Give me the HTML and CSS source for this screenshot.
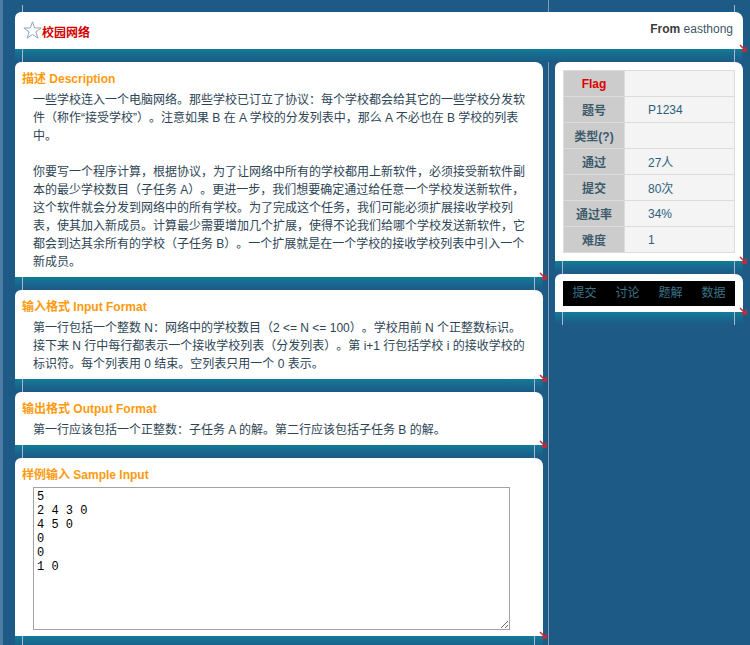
FILE: index.html
```html
<!DOCTYPE html>
<html lang="zh-CN">
<head>
<meta charset="utf-8">
<title>校园网络</title>
<link rel="stylesheet" href="styles.css">
</head>
<body>
<div class="page">
  <div class="cap"></div>
  <div class="panel">
    <header class="card head">
      <div class="title-group">
        <svg class="star" width="19" height="18" viewBox="0 0 19 18"><polygon points="9.5,0.8 11.6,6.9 18.1,7 12.9,10.9 14.8,17.1 9.5,13.4 4.2,17.1 6.1,10.9 0.9,7 7.4,6.9" fill="none" stroke="#8fa3bb" stroke-width="1" stroke-linejoin="miter"/></svg>
        <span class="title">校园网络</span>
      </div>
      <div class="from"><b>From</b> easthong</div>
      <svg class="mark" width="9" height="8" viewBox="0 0 9 8"><path d="M1 1 L7 7 M7 2.5 V7 H2.5" fill="none" stroke="#d9262b" stroke-width="1.5"/></svg>
    </header>
  </div>
  <div class="main">
    <div class="col">
      <section class="panel">
        <div class="card">
          <h2 class="sec-title">描述 Description</h2>
          <div class="sec-body">一些学校连入一个电脑网络。那些学校已订立了协议：每个学校都会给其它的一些学校分发软件（称作“接受学校”）。注意如果 B 在 A 学校的分发列表中，那么 A 不必也在 B 学校的列表中。<br><br>你要写一个程序计算，根据协议，为了让网络中所有的学校都用上新软件，必须接受新软件副本的最少学校数目（子任务 A）。更进一步，我们想要确定通过给任意一个学校发送新软件，这个软件就会分发到网络中的所有学校。为了完成这个任务，我们可能必须扩展接收学校列表，使其加入新成员。计算最少需要增加几个扩展，使得不论我们给哪个学校发送新软件，它都会到达其余所有的学校（子任务 B）。一个扩展就是在一个学校的接收学校列表中引入一个新成员。</div>
          <svg class="mark" width="9" height="8" viewBox="0 0 9 8"><path d="M1 1 L7 7 M7 2.5 V7 H2.5" fill="none" stroke="#d9262b" stroke-width="1.5"/></svg>
        </div>
      </section>
      <section class="panel">
        <div class="card">
          <h2 class="sec-title">输入格式 Input Format</h2>
          <div class="sec-body">第一行包括一个整数 N：网络中的学校数目（2 &lt;= N &lt;= 100）。学校用前 N 个正整数标识。接下来 N 行中每行都表示一个接收学校列表（分发列表）。第 i+1 行包括学校 i 的接收学校的标识符。每个列表用 0 结束。空列表只用一个 0 表示。</div>
          <svg class="mark" width="9" height="8" viewBox="0 0 9 8"><path d="M1 1 L7 7 M7 2.5 V7 H2.5" fill="none" stroke="#d9262b" stroke-width="1.5"/></svg>
        </div>
      </section>
      <section class="panel">
        <div class="card">
          <h2 class="sec-title">输出格式 Output Format</h2>
          <div class="sec-body">第一行应该包括一个正整数：子任务 A 的解。第二行应该包括子任务 B 的解。</div>
          <svg class="mark" width="9" height="8" viewBox="0 0 9 8"><path d="M1 1 L7 7 M7 2.5 V7 H2.5" fill="none" stroke="#d9262b" stroke-width="1.5"/></svg>
        </div>
      </section>
      <section class="panel">
        <div class="card">
          <h2 class="sec-title">样例输入 Sample Input</h2>
          <textarea class="sample" readonly>5
2 4 3 0
4 5 0
0
0
1 0</textarea>
          <svg class="mark" width="9" height="8" viewBox="0 0 9 8"><path d="M1 1 L7 7 M7 2.5 V7 H2.5" fill="none" stroke="#d9262b" stroke-width="1.5"/></svg>
        </div>
      </section>
    </div>
    <aside class="col">
      <section class="panel">
        <div class="card side-card">
          <table class="stats">
            <tr><th class="flag">Flag</th><td></td></tr>
            <tr><th>题号</th><td>P1234</td></tr>
            <tr><th>类型(?)</th><td></td></tr>
            <tr><th>通过</th><td>27人</td></tr>
            <tr><th>提交</th><td>80次</td></tr>
            <tr><th>通过率</th><td>34%</td></tr>
            <tr><th>难度</th><td>1</td></tr>
          </table>
          <svg class="mark" width="9" height="8" viewBox="0 0 9 8"><path d="M1 1 L7 7 M7 2.5 V7 H2.5" fill="none" stroke="#d9262b" stroke-width="1.5"/></svg>
        </div>
      </section>
      <section class="panel">
        <div class="card nav-card">
          <nav class="nav">
            <a href="#">提交</a><a href="#">讨论</a><a href="#">题解</a><a href="#">数据</a>
          </nav>
          <svg class="mark" width="9" height="8" viewBox="0 0 9 8"><path d="M1 1 L7 7 M7 2.5 V7 H2.5" fill="none" stroke="#d9262b" stroke-width="1.5"/></svg>
        </div>
      </section>
    </aside>
  </div>
</div>
</body>
</html>
```

FILE: styles.css
```css
html, body {
  margin: 0;
  padding: 0;
}
body {
  width: 750px;
  height: 645px;
  overflow: hidden;
  font-family: "Liberation Sans", "Noto Sans CJK SC", sans-serif;
  font-size: 12px;
  color: #2d4455;
  text-spacing-trim: space-all;
  background:
    linear-gradient(90deg, #4d7ca5 0, #4d7ca5 3px, transparent 3px),
    linear-gradient(90deg, transparent 548px, #7f9db8 548px, #7f9db8 549px, transparent 549px),
    #1d5a86;
}
.page {
  padding: 5px 7px 0 15px;
}
.cap {
  height: 7px;
  background:
    linear-gradient(90deg, transparent 7px, #a6b9ca 7px, #a6b9ca 8px, transparent 8px),
    linear-gradient(270deg, transparent 8px, #a6b9ca 8px, #a6b9ca 9px, transparent 9px);
}
.panel::after {
  content: "";
  display: block;
  height: 13px;
  background:
    linear-gradient(90deg, transparent 7px, #a6b9ca 7px, #a6b9ca 8px, transparent 8px),
    linear-gradient(270deg, transparent 8px, #a6b9ca 8px, #a6b9ca 9px, transparent 9px),
    linear-gradient(180deg, #127c97 0, #18698f 50%, #1d5a86 100%);
}
.card {
  position: relative;
  background: #fff;
  border-radius: 6px 8px 0 0;
  padding: 8px 12px 6px 7px;
}
.mark {
  position: absolute;
  right: -5px;
  bottom: -3px;
  display: block;
}
.head {
  height: 37px;
  box-sizing: border-box;
  padding: 0 10px 0 8px;
  display: flex;
  justify-content: space-between;
  align-items: flex-start;
}
.title-group {
  display: flex;
  align-items: flex-end;
  margin-top: 9px;
}
.star {
  display: block;
}
.title {
  color: #d40000;
  font-weight: bold;
  font-size: 12px;
  line-height: 12px;
}
.from {
  margin-top: 8px;
  line-height: 18px;
  color: #3e5766;
}
.from b {
  color: #3b3b3b;
}
.main {
  display: grid;
  grid-template-columns: 528px 188px;
  column-gap: 12px;
  align-items: start;
}
.sec-title {
  margin: 0 0 3px;
  font-size: 12px;
  line-height: 18px;
  font-weight: bold;
  color: #ff9a0d;
}
.sec-body {
  margin-left: 11px;
  line-height: 18px;
}
.sample {
  display: block;
  margin: 2px 0 0 11px;
  width: 477px;
  height: 143px;
  box-sizing: border-box;
  border: 1px solid #a3a3a3;
  padding: 2px 3px;
  font-family: "Liberation Mono", monospace;
  font-size: 12px;
  line-height: 14px;
  color: #000;
  background: #fff;
  outline: none;
}
.side-card {
  padding: 8px 8px 8px 8px;
}
.stats {
  width: 100%;
  border-collapse: collapse;
}
.stats th, .stats td {
  height: 25px;
  padding: 0;
  border: 1px solid #dcdcdc;
  font-size: 12px;
}
.stats th {
  width: 60px;
  background: #cccccc;
  color: #3c5a6a;
  font-weight: bold;
  text-align: center;
}
.stats th.flag {
  color: #dd0000;
}
.stats td {
  background: #f4f4f4;
  color: #2c607c;
  padding-left: 23px;
}
.nav-card {
  padding: 7px 8px 6px 8px;
}
.nav {
  display: grid;
  grid-template-columns: repeat(4, 1fr);
  background: #000;
  height: 25px;
}
.nav a {
  color: #3a7488;
  text-decoration: none;
  text-align: center;
  line-height: 25px;
  font-size: 12px;
}
```
